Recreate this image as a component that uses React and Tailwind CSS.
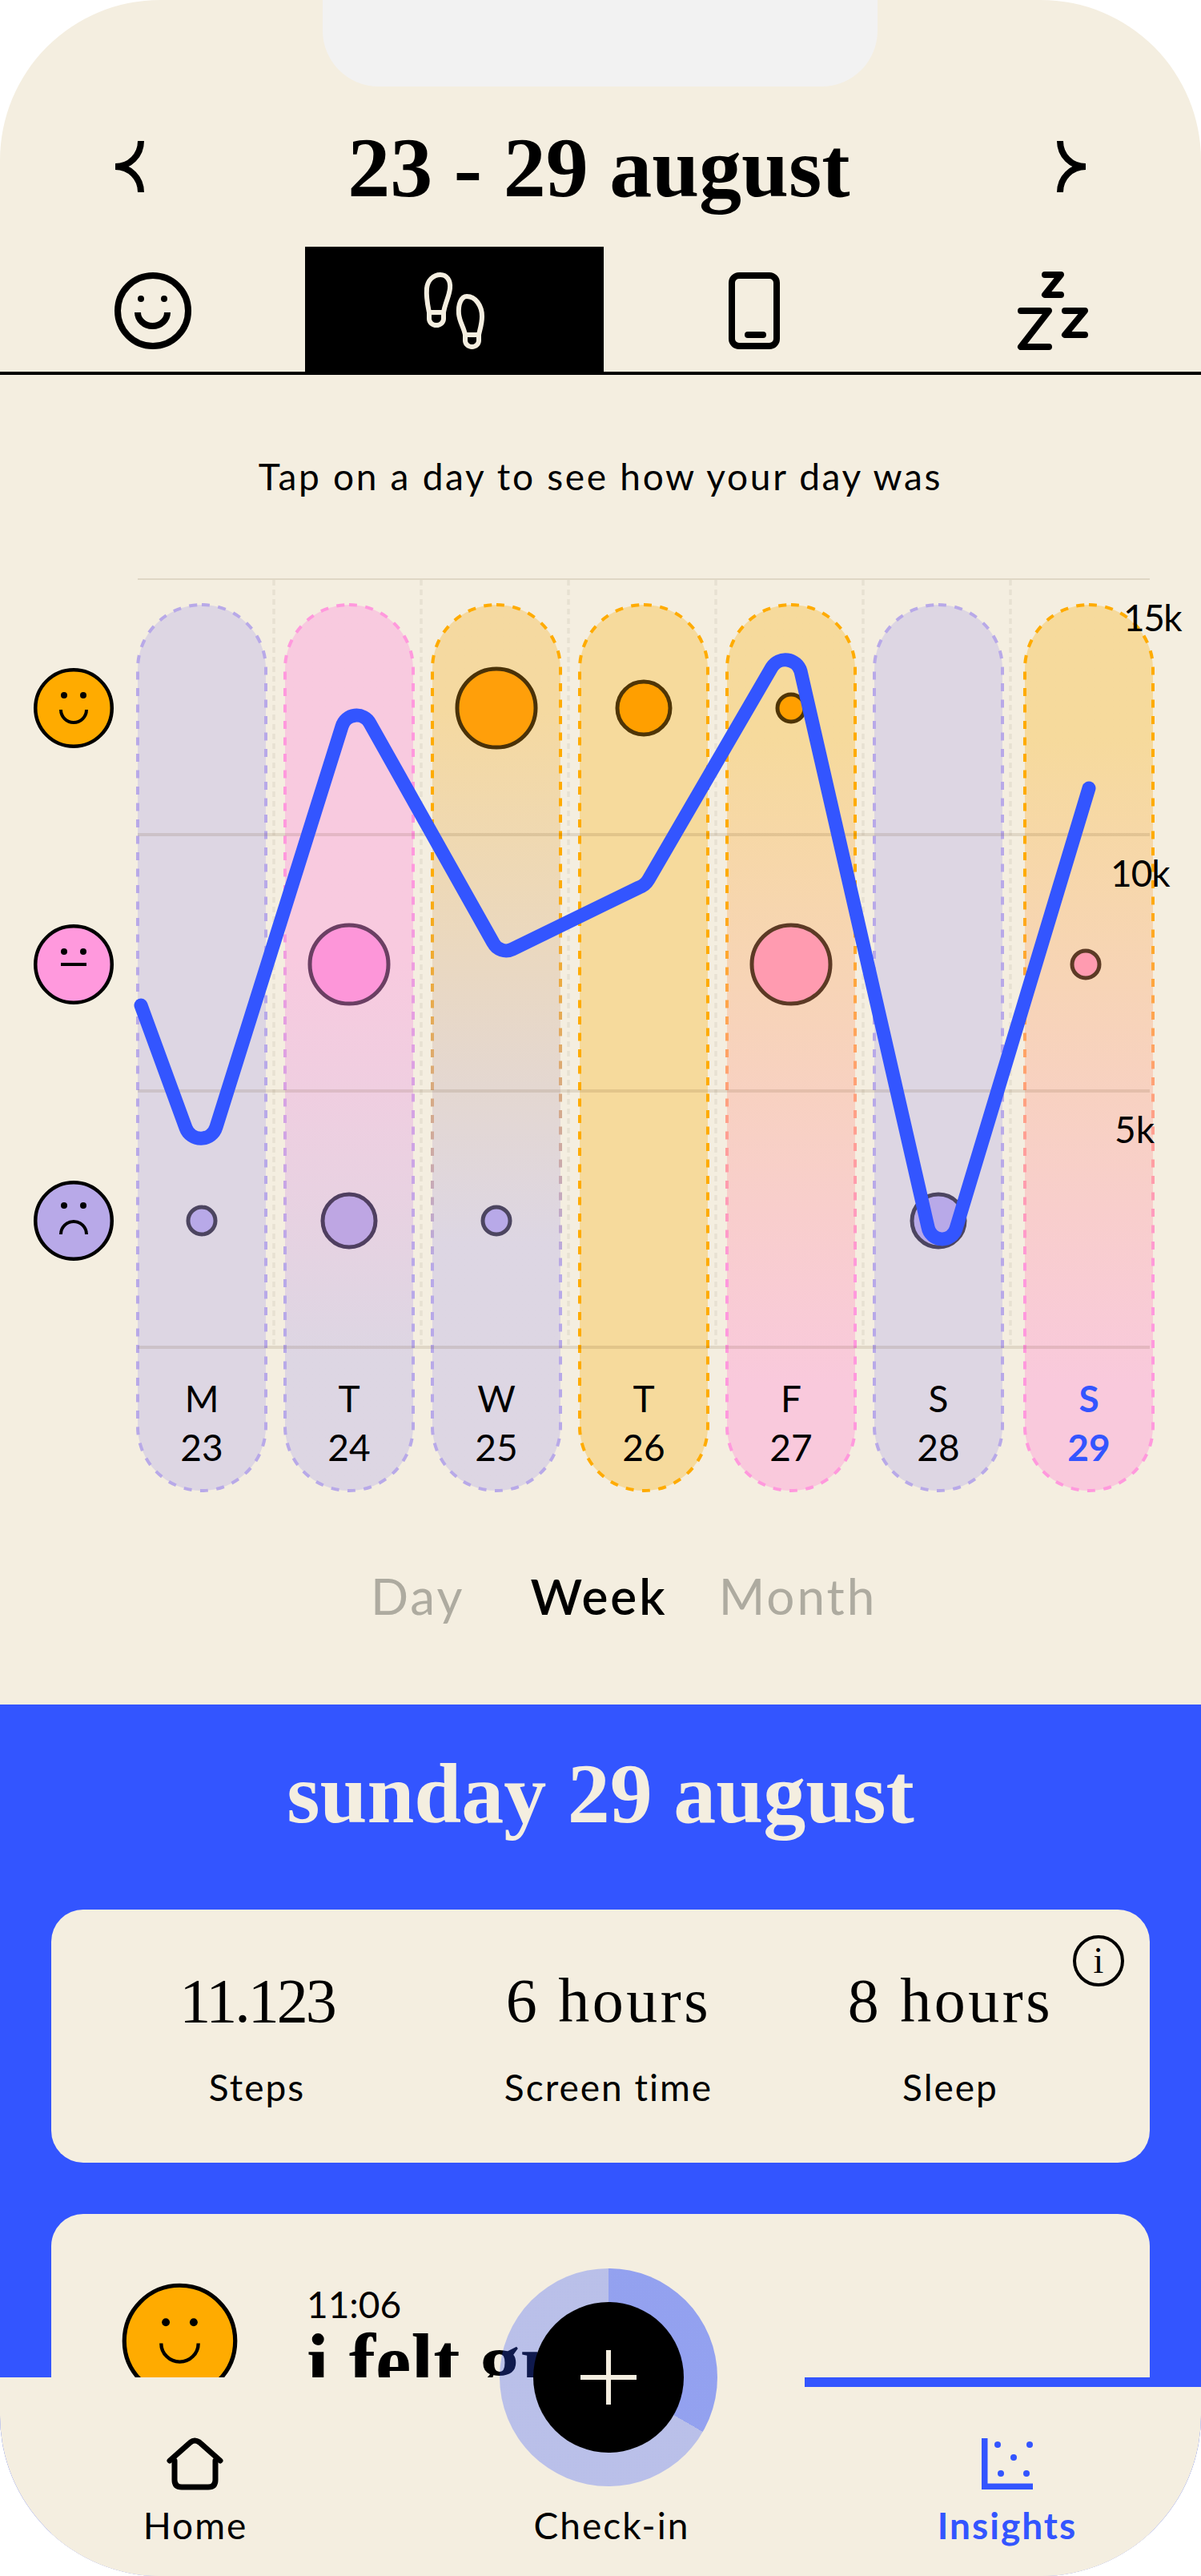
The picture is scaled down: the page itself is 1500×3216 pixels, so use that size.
import React from 'react'

const days = [
  { d: 'M', n: '23', bg: 'bg-[#ddd6e3]', from: '#b8a9e8', to: '#b8a9e8' },
  { d: 'T', n: '24', bg: 'bg-linear-to-b from-[#f8cadf] from-40% to-[#ddd6e3] to-85%', from: '#ff99dd', to: '#b8a9e8' },
  { d: 'W', n: '25', bg: 'bg-linear-to-b from-[#f5d9a0] from-12% to-[#ddd6e3] to-72%', from: '#ffab00', to: '#b8a9e8' },
  { d: 'T', n: '26', bg: 'bg-[#f6da9c]', from: '#ffab00', to: '#ffab00' },
  { d: 'F', n: '27', bg: 'bg-linear-to-b from-[#f6da9c] from-15% to-[#f9c9dc] to-88%', from: '#ffab00', to: '#ff99dd' },
  { d: 'S', n: '28', bg: 'bg-[#ddd6e3]', from: '#b8a9e8', to: '#b8a9e8' },
  { d: 'S', n: '29', bg: 'bg-linear-to-b from-[#f6da9c] from-15% to-[#f9c9dc] to-88%', from: '#ffab00', to: '#ff99dd', today: true },
]

const bubbles = [
  { x: 620, y: 884, r: 49, fill: '#ff9f0a', stroke: '#4a3208' },
  { x: 804, y: 884, r: 33, fill: '#ff9f00', stroke: '#4f3506' },
  { x: 988, y: 884, r: 17, fill: '#ff9f00', stroke: '#4f3506' },
  { x: 436, y: 1204, r: 49, fill: '#fd96d9', stroke: '#6b3f63' },
  { x: 988, y: 1204, r: 49, fill: '#ff9bb0', stroke: '#5c3a25' },
  { x: 1356, y: 1204, r: 17, fill: '#ff9bb0', stroke: '#5c3a25' },
  { x: 252, y: 1524, r: 17, fill: '#b8a9e8', stroke: '#4c4560' },
  { x: 436, y: 1524, r: 33, fill: '#bea6e3', stroke: '#4f3f60' },
  { x: 620, y: 1524, r: 17, fill: '#b8a9e8', stroke: '#4c4560' },
  { x: 1172, y: 1524, r: 33, fill: '#b8a9e8', stroke: '#4c4560' },
]

const steps =
  'M176 1255L232 1408A20 20 0 0 0 270 1407L427 907A19 19 0 0 1 462 903L616 1177A18 18 0 0 0 640 1185L798 1108Q806 1105 810 1098L964 833A20 20 0 0 1 1000 838L1159 1532A18 18 0 0 0 1194 1534L1360 984'

function Mood({ kind, size = 100, fill, thin }) {
  const line = thin ? 3 : 4
  const eye = thin ? 3.4 : 4
  return (
    <svg width={size} height={size} viewBox="0 0 100 100" className="shrink-0">
      <circle cx="50" cy="50" r="47.75" fill={fill} stroke="#000" strokeWidth={thin ? 3.6 : 4.5} />
      <circle cx="38" cy={kind === 'sad' ? 31 : 34} r={eye} />
      <circle cx="62" cy={kind === 'sad' ? 31 : 34} r={eye} />
      {kind === 'happy' && <path d="M34 52A16 16 0 0 0 66 52" fill="none" stroke="#000" strokeWidth={line} />}
      {kind === 'neutral' && <path d="M34 50H66" stroke="#000" strokeWidth={line} />}
      {kind === 'sad' && <path d="M34 67A16 16 0 0 1 66 67" fill="none" stroke="#000" strokeWidth={line} />}
    </svg>
  )
}

function Chevron({ flip }) {
  return (
    <svg width="36" height="64" viewBox="0 0 36 64" className={flip ? '-scale-x-100' : ''}>
      <path d="M32 0C32 18 18 32 0 32C18 32 32 46 32 64" fill="none" stroke="#000" strokeWidth="8" />
    </svg>
  )
}

function DayColumn({ day, id }) {
  return (
    <div className={`relative flex h-[1106px] w-[160px] shrink-0 flex-col items-center justify-end rounded-[80px] pb-[24px] text-[46px] leading-[61px] ${day.bg} ${day.today ? 'ml-[4px] font-bold text-[#3355ff]' : 'text-black'}`}>
      <svg className="absolute inset-0 overflow-visible" width="160" height="1106" fill="none">
        <defs>
          <linearGradient id={id} x1="0" y1="0" x2="0" y2="1">
            <stop offset="0.3" stopColor={day.from} />
            <stop offset="0.75" stopColor={day.to} />
          </linearGradient>
        </defs>
        <rect x="0" y="0" width="160" height="1106" rx="80" stroke={`url(#${id})`} strokeWidth="4" strokeDasharray="10 10.500" />
      </svg>
      <span className="relative">{day.d}</span>
      <span className="relative">{day.n}</span>
    </div>
  )
}

function Chart() {
  return (
    <div className="relative mt-[99px] flex h-[1139px] w-full shrink-0">
      <div className="flex w-[172px] flex-col gap-[220px] pl-[42px] pt-[112px]">
        <Mood kind="happy" fill="#ffab00" />
        <Mood kind="neutral" fill="#ff99dd" />
        <Mood kind="sad" fill="#b8a9e8" />
      </div>
      <div className="mt-[33px] flex gap-[24px]">
        {days.map((day, i) => (
          <DayColumn key={i} day={day} id={`col-stroke-${i}`} />
        ))}
      </div>

      {/* grid, bubbles and step line sit over the columns */}
      <svg className="pointer-events-none absolute inset-0" width="1500" height="1139" viewBox="0 722 1500 1139" fill="none">
        {[342, 526, 710, 894, 1078, 1262].map((x) => (
          <path key={x} d={`M${x} 724V1682`} stroke="#e7e1d2" strokeWidth="3.5" strokeDasharray="7 5" />
        ))}
        <path d="M172 722H1436" stroke="#dfd7c5" strokeWidth="4" />
        {[1042, 1362, 1682].map((y) => (
          <path key={y} d={`M172 ${y}H1436`} stroke="#5b3d14" strokeOpacity="0.13" strokeWidth="4" />
        ))}
        {bubbles.map((b, i) => (
          <circle key={i} cx={b.x} cy={b.y} r={b.r} fill={b.fill} stroke={b.stroke} strokeWidth="5" />
        ))}
        <path d={steps} stroke="#3355ff" strokeWidth="17" strokeLinecap="round" strokeLinejoin="round" />
      </svg>

      <span className="absolute left-[1403px] top-[26px] text-[46px] leading-[46px] tracking-[-1.5px]">15k</span>
      <span className="absolute left-[1387px] top-[345px] text-[46px] leading-[46px] tracking-[-1px]">10k</span>
      <span className="absolute left-[1392px] top-[665px] text-[46px] leading-[46px]">5k</span>
    </div>
  )
}

function Tabs() {
  return (
    <div className="grid h-[160px] shrink-0 grid-cols-[381px_373px_375px_1fr] shadow-[inset_0_-4px_0_#000]">
      <div className="flex items-center justify-center">
        <svg width="96" height="96" viewBox="0 0 96 96" fill="none" stroke="#000" strokeWidth="8">
          <circle cx="48" cy="48" r="44" />
          <circle cx="33" cy="33" r="4" fill="#000" stroke="none" />
          <circle cx="62" cy="33" r="4" fill="#000" stroke="none" />
          <path d="M29 50A18.5 17 0 0 0 66 50" />
        </svg>
      </div>
      <div className="flex items-center justify-center bg-black">
        <svg width="80" height="100" viewBox="526 338 80 100" fill="none" stroke="#f4eee0" strokeWidth="6">
          <path d="M548 343C556 343 561 350 560 360C559 370 554 378 552 390V398A9 8 0 0 1 534 398V390C532 380 530 372 531 360C532 350 539 343 548 343Z" />
          <path d="M534 390H552" />
          <path d="M581 370C592 370 600 382 600 395C600 405 597 412 596 418V425A8.5 8 0 0 1 579 425V418C577 408 572 402 571 392C570 380 574 370 581 370Z" />
          <path d="M579 418H596" />
        </svg>
      </div>
      <div className="flex items-center justify-center">
        <svg width="64" height="96" viewBox="0 0 64 96" fill="none" stroke="#000" strokeWidth="8" strokeLinecap="round">
          <rect x="4" y="4" width="56" height="88" rx="9" />
          <path d="M24 78H43" />
        </svg>
      </div>
      <div className="flex items-center justify-center">
        <svg width="90" height="100" viewBox="1269 338 90 100" fill="none" stroke="#000" strokeWidth="8" strokeLinecap="round" strokeLinejoin="round">
          <path d="M1304 343H1324L1304 368H1324" />
          <path d="M1274 388H1309L1274 433H1309" />
          <path d="M1329 388H1354L1329 418H1354" />
        </svg>
      </div>
    </div>
  )
}

function Stat({ value, label, track }) {
  return (
    <div className="flex flex-col items-center">
      <div className={`font-['Liberation_Serif',serif] text-[78px] leading-[90px] ${track}`}>{value}</div>
      <div className="mt-[35px] text-[46px] leading-[56px] tracking-[2px]">{label}</div>
    </div>
  )
}

function BottomNav() {
  return (
    <div className="absolute bottom-0 left-0 h-[248px] w-full bg-[#f4eee0]">
      <div className="absolute right-0 top-0 h-[12px] w-[495px] bg-[#3355ff]" />
      <div className="absolute left-[624px] top-[-136px] flex size-[272px] items-center justify-center rounded-full bg-[conic-gradient(rgba(51,85,255,0.5)_0deg_120deg,rgba(51,85,255,0.3)_120deg_360deg)]">
        <div className="flex size-[188px] items-center justify-center rounded-full bg-black">
          <svg width="70" height="68" viewBox="0 0 70 68" stroke="#f4eee0" strokeWidth="6">
            <path d="M35 0V68M0 34H70" />
          </svg>
        </div>
      </div>
      <div className="grid h-full grid-cols-[488px_552px_436px] text-[46px] leading-[46px] tracking-[2px]">
        <div className="flex flex-col items-center justify-end pb-[40px]">
          <svg width="72" height="68" viewBox="211 3042 72 68" fill="none" stroke="#000" strokeWidth="7" strokeLinecap="round" strokeLinejoin="round">
            <path d="M215 3072L241 3049Q246 3045 252 3049L278 3072" />
            <path d="M221 3072V3096Q221 3105 230 3105H263Q272 3105 272 3096V3072" />
          </svg>
          <span className="mt-[20px]">Home</span>
        </div>
        <div className="flex flex-col items-center justify-end pb-[40px]">
          <span>Check-in</span>
        </div>
        <div className="flex flex-col items-center justify-end pb-[40px] font-bold text-[#3355ff]">
          <svg width="64" height="64" viewBox="1226 3044 64 64" fill="#3355ff">
            <path d="M1226 3044H1233.500V3100.500H1290V3108H1226Z" />
            <circle cx="1246" cy="3052" r="4" />
            <circle cx="1286" cy="3052" r="4" />
            <circle cx="1266" cy="3068" r="4" />
            <circle cx="1250" cy="3088" r="4" />
            <circle cx="1282" cy="3088" r="4" />
          </svg>
          <span className="mt-[22px]">Insights</span>
        </div>
      </div>
    </div>
  )
}

export default function App() {
  return (
    <div className="relative flex h-[3216px] w-[1500px] flex-col overflow-hidden rounded-[200px] bg-[#f4eee0] font-[Lato,sans-serif] text-black">
      <div className="absolute left-[403px] top-0 h-[108px] w-[693px] rounded-b-[70px] bg-[#f2f2f2]" />

      <div className="mb-[22px] mt-[130px] flex h-[156px] shrink-0 items-center justify-between px-[144px]">
        <Chevron />
        <h1 className="mr-[4px] mt-[4px] font-['Liberation_Serif',serif] text-[106px] leading-[156px] font-bold">23 - 29 august</h1>
        <Chevron flip />
      </div>

      <Tabs />

      <p className="mt-[99px] shrink-0 text-center text-[46px] leading-[56px] tracking-[2.7px]">Tap on a day to see how your day was</p>

      <Chart />

      <div className="mt-[95px] flex shrink-0 pl-[463px] text-[62px] leading-[72px] tracking-[3px] text-[#aeaba0]">
        <span>Day</span>
        <span className="ml-[82px] font-semibold text-black">Week</span>
        <span className="ml-[64px]">Month</span>
      </div>

      <section className="mt-[100px] min-h-0 flex-1 bg-[#3355ff] px-[64px] pt-[52px]">
        <h2 className="text-center font-['Liberation_Serif',serif] text-[106px] leading-[120px] font-bold text-[#f4eee0]">sunday 29 august</h2>

        <div className="relative mt-[84px] grid h-[316px] grid-cols-[514px_364px_490px] rounded-[40px] bg-[#f4eee0] pt-[69px]">
          <Stat value="11.123" label="Steps" track="tracking-[-3px]" />
          <Stat value="6 hours" label="Screen time" track="tracking-[3.5px]" />
          <Stat value="8 hours" label="Sleep" track="tracking-[3.5px]" />
          <div className="absolute right-[32px] top-[32px] flex size-[64px] items-center justify-center rounded-full border-4 border-black font-['Liberation_Serif',serif] text-[46px] leading-none">i</div>
        </div>

        <div className="mt-[64px] flex h-[500px] items-start rounded-[40px] bg-[#f4eee0] pl-[88px] pt-[86px]">
          <Mood kind="happy" size={145} fill="#ffab00" thin />
          <div className="ml-[86px] pt-[4px]">
            <div className="text-[46px] leading-[46px]">11:06</div>
            <div className="font-['Liberation_Serif',serif] text-[100px] leading-[98px] font-bold whitespace-nowrap">i felt great</div>
          </div>
        </div>
      </section>

      <BottomNav />
    </div>
  )
}
